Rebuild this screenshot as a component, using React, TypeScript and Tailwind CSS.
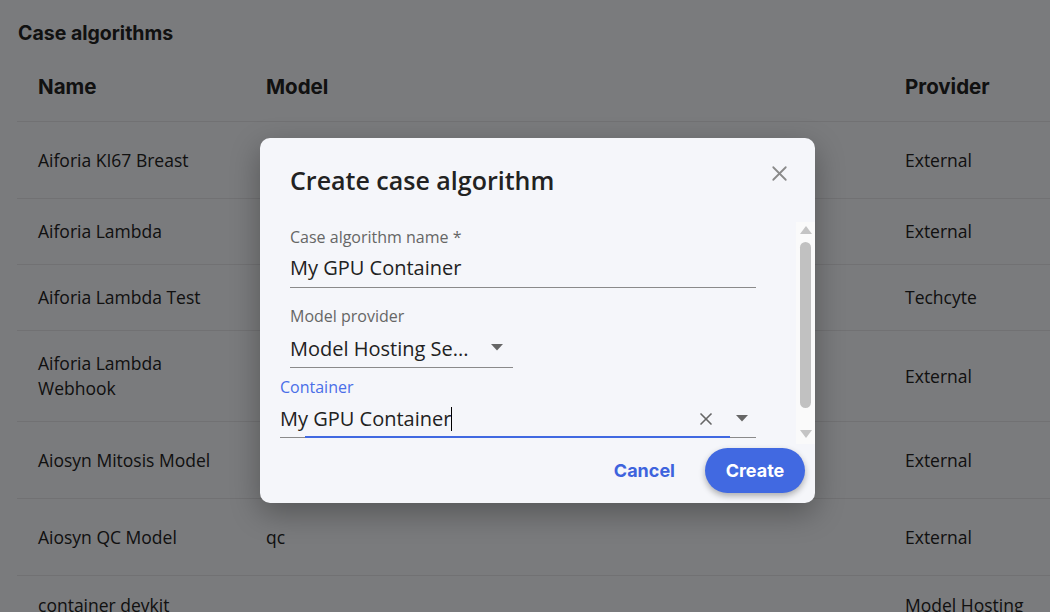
import { X } from "lucide-react"

const rows = [
  { name: ["Aiforia KI67 Breast"], model: "", provider: "External", h: "h-[77px]" },
  { name: ["Aiforia Lambda"], model: "", provider: "External", h: "h-[66px]" },
  { name: ["Aiforia Lambda Test"], model: "", provider: "Techcyte", h: "h-[66px]" },
  { name: ["Aiforia Lambda", "Webhook"], model: "", provider: "External", h: "h-[91px]" },
  { name: ["Aiosyn Mitosis Model"], model: "", provider: "External", h: "h-[77px]" },
  { name: ["Aiosyn QC Model"], model: "qc", provider: "External", h: "h-[77px]" },
]

function Caret() {
  return (
    <svg width="12" height="7" viewBox="0 0 12 7" className="shrink-0">
      <path d="M0 0h12L6 6.5z" fill="#666" />
    </svg>
  )
}

function Scrollbar() {
  return (
    <div className="w-[19px] shrink-0 bg-[#fafafa] flex flex-col items-center pt-[4px] pb-[6px]">
      <svg width="12" height="8" viewBox="0 0 12 8">
        <path d="M6 0l6 8H0z" fill="#c4c4c4" />
      </svg>
      <div className="mt-[8px] w-[11px] h-[166px] rounded-full bg-[#c1c1c1]" />
      <div className="flex-1" />
      <svg width="12" height="8" viewBox="0 0 12 8">
        <path d="M0 0h12L6 8z" fill="#c4c4c4" />
      </svg>
    </div>
  )
}

function Dialog() {
  return (
    <div className="absolute left-[260px] top-[138px] w-[555px] h-[365px] rounded-[10px] bg-[#f5f6fa] shadow-[0_10px_30px_rgba(0,0,0,0.3)] flex flex-col">
      <div className="flex items-start justify-between pl-[30px] pr-[23px] h-[84px] pt-[23px]">
        <h2 className="mt-[2px] font-['Open_Sans',sans-serif] text-[25px] leading-[34px] font-semibold text-[#222]">Create case algorithm</h2>
        <X className="w-[25px] h-[25px] text-[#8a8a8a]" strokeWidth={1.7} />
      </div>
      <div className="flex h-[222px] overflow-hidden font-['Open_Sans',sans-serif]">
        <div className="flex-1 pt-[6px] pr-[40px]">
          <div className="pl-[30px]">
            <div className="text-[16px] leading-[18px] text-[#666]">Case algorithm name *</div>
            <div className="mt-[5px] h-[37px] border-b border-[#8a8a8a] text-[20px] leading-[34px] text-[#222]">My GPU Container</div>
          </div>
          <div className="pl-[30px] mt-[19px]">
            <div className="text-[16px] leading-[18px] text-[#666]">Model provider</div>
            <div className="mt-[3px] w-[223px] h-[40px] border-b border-[#8a8a8a] flex items-center gap-[10px] pr-[10px] text-[20px] text-[#222]">
              <span className="flex-1 pt-[2px]">Model Hosting Se...</span>
              <Caret />
            </div>
          </div>
          <div className="pl-[20px] mt-[10px]">
            <div className="text-[16px] leading-[18px] text-[#4a6ee8]">Container</div>
            <div className="relative mt-[3px] h-[39px] border-b border-[#8a8a8a] flex items-center text-[20px] text-[#222]">
              <span className="pt-[2px]">My GPU Container</span>
              <span className="w-[1px] h-[24px] bg-black mt-[2px]" />
              <span className="flex-1" />
              <X className="w-[20px] h-[20px] text-[#666] mr-[20px] mt-[1px]" strokeWidth={2} />
              <span className="mr-[8px] mt-[1px]">
                <Caret />
              </span>
              <div className="absolute left-[25px] right-[26px] bottom-[-1px] h-[2px] bg-[#4169e1]" />
            </div>
          </div>
        </div>
        <Scrollbar />
      </div>
      <div className="flex items-center justify-end gap-[30px] pr-[10px] pt-[4px] font-['Inter',sans-serif]">
        <button className="text-[18px] font-bold text-[#3e63dd]">Cancel</button>
        <button className="w-[100px] h-[45px] rounded-full bg-[#4169e1] text-white text-[18px] font-bold shadow-[0_3px_6px_rgba(0,0,0,0.3)]">
          Create
        </button>
      </div>
    </div>
  )
}

export default function App() {
  return (
    <div className="relative w-full h-[612px] overflow-hidden bg-[#f5f6fa] text-[#222]">
      <div className="pt-[22px] pl-[18px] font-['Inter',sans-serif] text-[19.5px] leading-[22px] font-bold">Case algorithms</div>
      <div className="ml-[17px] mt-[7px] font-['Open_Sans',sans-serif]">
        <div className="flex items-center h-[71px] pt-[2px] border-b border-[#e2e3e6] font-['Inter',sans-serif] text-[20.5px] font-bold">
          <div className="w-[228px] shrink-0 pl-[21px]">Name</div>
          <div className="w-[639px] shrink-0 pl-[21px]">Model</div>
          <div className="shrink-0 pl-[21px]">Provider</div>
        </div>
        {rows.map((r) => (
          <div key={r.name.join(" ")} className={`flex items-center border-b border-[#e2e3e6] text-[17.5px] leading-[25px] ${r.h}`}>
            <div className="w-[228px] shrink-0 pl-[21px]">
              {r.name.map((n) => (
                <div key={n}>{n}</div>
              ))}
            </div>
            <div className="w-[639px] shrink-0 pl-[21px]">{r.model}</div>
            <div className="shrink-0 pl-[21px] whitespace-nowrap">{r.provider}</div>
          </div>
        ))}
        <div className="flex items-start pt-[17px] h-[91px] text-[17.5px] leading-[25px]">
          <div className="w-[228px] shrink-0 pl-[21px]">container devkit</div>
          <div className="w-[639px] shrink-0 pl-[21px]"></div>
          <div className="shrink-0 pl-[21px] w-[170px]">Model Hosting Service</div>
        </div>
      </div>
      <div className="absolute inset-0 bg-black/50" />
      <Dialog />
    </div>
  )
}
